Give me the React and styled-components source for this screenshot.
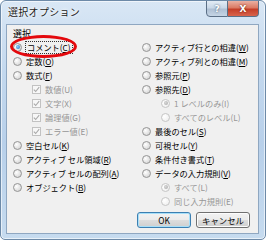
import React from "react";
import styled, { createGlobalStyle, css } from "styled-components";

const Global = createGlobalStyle`
  html, body { margin: 0; padding: 0; background: #ffffff; }
  body { font-family: "Noto Sans CJK JP", "Noto Sans", sans-serif; }
`;

const Window = styled.div`
  position: relative;
  width: 266px;
  height: 240px;
  box-sizing: border-box;
  display: flex;
  flex-direction: column;
  border: 1px solid #6d8aa8;
  border-radius: 6px 6px 5px 5px;
  background: linear-gradient(180deg, #d9e7f5 0%, #c3d8ee 30%, #b8d0ea 60%, #c6dbef 100%);
  box-shadow: inset 0 0 0 1px rgba(255, 255, 255, 0.6);
  overflow: hidden;
`;

const TitleBar = styled.div`
  height: 23px;
  flex: none;
  display: flex;
  align-items: flex-start;
  justify-content: space-between;
  padding: 0 6px 0 7px;
`;

const Title = styled.div`
  margin-top: 5px;
  font-size: 10px;
  line-height: 12px;
  color: #1a1a1a;
  text-shadow: 0 0 4px #ffffff, 0 0 2px #ffffff;
  letter-spacing: 0.3px;
`;

const Caption = styled.div`
  display: flex;
  margin-top: -1px;
`;

const CapBtn = styled.div`
  height: 17px;
  display: flex;
  align-items: center;
  justify-content: center;
  font-family: "DejaVu Sans", sans-serif;
  font-weight: bold;
  font-size: 9px;
  box-sizing: border-box;
  border: 1px solid #5b6f86;
  ${(p) =>
    p.$close
      ? css`
          width: 31px;
          border-radius: 0 0 4px 0;
          border-left: none;
          background: linear-gradient(180deg, #eab0a2 0%, #db7a64 45%, #c43e28 55%, #d9644c 100%);
          color: #ffffff;
          text-shadow: 0 0 2px #5a1000;
        `
      : css`
          width: 22px;
          border-radius: 0 0 0 4px;
          background: linear-gradient(180deg, #e3ecf5 0%, #c9d8e8 45%, #afc0d4 55%, #c5d5e5 100%);
          color: #ffffff;
          text-shadow: 0 0 2px #30465f;
        `}
`;

const Client = styled.div`
  flex: 1;
  min-height: 0;
  margin: 0 6px 5px 5px;
  border: 1px solid #8fa7c1;
  background: #f0f0f0;
  display: flex;
  flex-direction: column;
  padding: 3px 6px 0 6px;
  position: relative;
`;

const GroupLabel = styled.div`
  font-size: 9px;
  line-height: 11px;
  color: #000;
`;

const Columns = styled.div`
  display: grid;
  grid-template-columns: 129px 1fr;
  margin-top: 1px;
`;

const Col = styled.div`
  display: flex;
  flex-direction: column;
`;

const Row = styled.div`
  height: 14px;
  display: flex;
  align-items: center;
  gap: 4px;
  padding-left: ${(p) => (p.$indent ? 19 : 0)}px;
  font-size: 8.2px;
  color: ${(p) => (p.$disabled ? "#969696" : "#000")};
  white-space: nowrap;
`;

const Radio = styled.span`
  width: 9px;
  height: 9px;
  border-radius: 50%;
  box-sizing: border-box;
  flex: none;
  position: relative;
  border: 1px solid ${(p) => (p.$disabled ? "#c6c6c6" : "#959595")};
  background: ${(p) =>
    p.$disabled
      ? "radial-gradient(circle at 35% 35%, #ffffff, #ececec)"
      : "radial-gradient(circle at 35% 35%, #ffffff, #dcdcdc 70%, #cfcfcf)"};
  &::after {
    content: "";
    display: ${(p) => (p.$checked ? "block" : "none")};
    position: absolute;
    left: 1.5px;
    top: 1.5px;
    width: 4px;
    height: 4px;
    border-radius: 50%;
    background: ${(p) =>
      p.$disabled
        ? "radial-gradient(circle at 40% 40%, #d8d8d8, #a6a6a6)"
        : "radial-gradient(circle at 40% 40%, #8fd0ff, #1b6fc0)"};
  }
`;

const Check = styled.span`
  width: 9px;
  height: 9px;
  box-sizing: border-box;
  flex: none;
  border: 1px solid #c2c2c2;
  background: #f7f7f7;
  display: flex;
  align-items: center;
  justify-content: center;
`;

const Label = styled.span`
  line-height: 11px;
  ${(p) =>
    p.$focus &&
    css`
      outline: 1px dotted #333;
      outline-offset: 0px;
      padding: 0 1px;
    `}
`;

const Key = styled.span`
  text-decoration: ${(p) => (p.$u ? "underline" : "none")};
`;

const Highlight = styled.div`
  position: absolute;
  left: 3px;
  top: 10px;
  width: 67px;
  height: 23px;
  border: 3px solid #e4090d;
  border-radius: 50%;
  box-sizing: border-box;
  pointer-events: none;
`;

const Buttons = styled.div`
  display: flex;
  justify-content: flex-end;
  gap: 5px;
  margin-top: auto;
  margin-bottom: 5px;
  padding-right: 2px;
`;

const Button = styled.div`
  width: 54px;
  height: 16px;
  box-sizing: border-box;
  border: 1px solid ${(p) => (p.$default ? "#3c7fb1" : "#707070")};
  border-radius: 3px;
  background: linear-gradient(180deg, #f2f2f2 0%, #ebebeb 48%, #dddddd 52%, #cfcfcf 100%);
  box-shadow: inset 0 0 0 1px ${(p) => (p.$default ? "#a6dff9" : "#fcfcfc")};
  display: flex;
  align-items: center;
  justify-content: center;
  font-size: 8.4px;
  color: #000;
`;

const CheckMark = () => (
  <svg width="7" height="7" viewBox="0 0 7 7">
    <path d="M0.8 3.6 L2.7 5.5 L6.2 1.2" fill="none" stroke="#a9a9a9" strokeWidth="1.1" />
  </svg>
);

const Item = ({ kind = "radio", text, k, checked, disabled, indent, focus }) => (
  <Row $disabled={disabled} $indent={indent}>
    {kind === "radio" ? (
      <Radio $checked={checked} $disabled={disabled} />
    ) : (
      <Check>{checked && <CheckMark />}</Check>
    )}
    <Label $focus={focus}>
      {text}({<Key $u={!disabled}>{k}</Key>})
    </Label>
  </Row>
);

const left = [
  { text: "コメント", k: "C", checked: true, focus: true },
  { text: "定数", k: "O" },
  { text: "数式", k: "F" },
  { kind: "check", text: "数値", k: "U", checked: true, disabled: true, indent: true },
  { kind: "check", text: "文字", k: "X", checked: true, disabled: true, indent: true },
  { kind: "check", text: "論理値", k: "G", checked: true, disabled: true, indent: true },
  { kind: "check", text: "エラー値", k: "E", checked: true, disabled: true, indent: true },
  { text: "空白セル", k: "K" },
  { text: "アクティブ セル領域", k: "R" },
  { text: "アクティブ セルの配列", k: "A" },
  { text: "オブジェクト", k: "B" },
];

const right = [
  { text: "アクティブ行との相違", k: "W" },
  { text: "アクティブ列との相違", k: "M" },
  { text: "参照元", k: "P" },
  { text: "参照先", k: "D" },
  { text: "1 レベルのみ", k: "I", checked: true, disabled: true, indent: true },
  { text: "すべてのレベル", k: "L", disabled: true, indent: true },
  { text: "最後のセル", k: "S" },
  { text: "可視セル", k: "Y" },
  { text: "条件付き書式", k: "T" },
  { text: "データの入力規則", k: "V" },
  { text: "すべて", k: "L", checked: true, disabled: true, indent: true },
  { text: "同じ入力規則", k: "E", disabled: true, indent: true },
];

export default function App() {
  return (
    <>
      <Global />
      <Window>
        <TitleBar>
          <Title>選択オプション</Title>
          <Caption>
            <CapBtn>?</CapBtn>
            <CapBtn $close>X</CapBtn>
          </Caption>
        </TitleBar>
        <Client>
          <GroupLabel>選択</GroupLabel>
          <Columns>
            <Col>
              {left.map((it, i) => (
                <Item key={i} {...it} />
              ))}
            </Col>
            <Col>
              {right.map((it, i) => (
                <Item key={i} {...it} />
              ))}
            </Col>
          </Columns>
          <Buttons>
            <Button $default>OK</Button>
            <Button>キャンセル</Button>
          </Buttons>
          <Highlight />
        </Client>
      </Window>
    </>
  );
}
